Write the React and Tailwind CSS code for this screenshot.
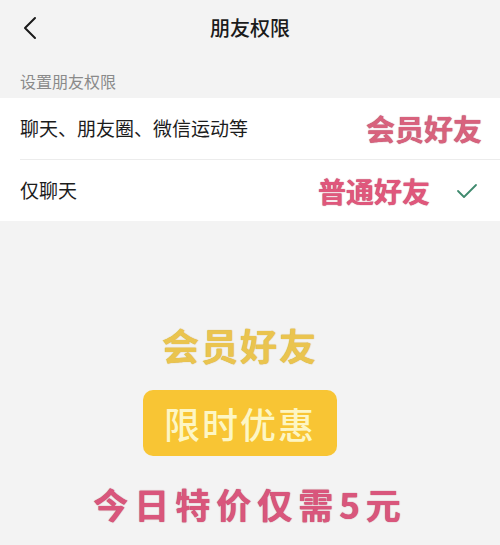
import React from "react";

const cjk = { fontFamily: '"Noto Sans CJK SC", "Noto Sans", sans-serif' };

export default function App() {
  return (
    <div className="w-[500px] h-[545px] bg-[#f3f3f3] flex flex-col overflow-hidden" style={cjk}>
      <div className="h-[55px] flex items-center relative shrink-0">
        <div className="pl-[22px] flex items-center">
          <svg width="16" height="24" viewBox="0 0 16 24" fill="none">
            <path d="M13 2 L3 12 L13 22" stroke="#1a1a1a" strokeWidth="2" strokeLinecap="round" strokeLinejoin="round" />
          </svg>
        </div>
        <div className="flex-1 text-center text-[20px] text-[#1b1b1b] font-medium pr-[38px] leading-none">朋友权限</div>
      </div>
      <div className="h-[42px] flex items-center pl-[20px] text-[16px] text-[#8a8a8a] shrink-0 pt-[10px]">设置朋友权限</div>
      <div className="bg-white flex flex-col shrink-0 mt-[1px]">
        <div className="h-[61px] flex items-center justify-between pl-[20px] pr-[18px]">
          <span className="text-[19px] text-[#1c1c1c]">聊天、朋友圈、微信运动等</span>
          <span className="text-[29px] font-bold text-[#d8627d] leading-none" style={{ textShadow: "0 0 1px #9c3350" }}>会员好友</span>
        </div>
        <div className="ml-[20px] h-px bg-[#ececec]" />
        <div className="h-[61px] flex items-center justify-between pl-[20px] pr-[22px]">
          <span className="text-[19px] text-[#1c1c1c]">仅聊天</span>
          <div className="flex items-center gap-[26px]">
            <span className="text-[28px] font-bold text-[#e0577c] leading-none" style={{ textShadow: "0 0 1px #a8334f" }}>普通好友</span>
            <svg width="22" height="16" viewBox="0 0 22 16" fill="none">
              <path d="M2 8 L8 14 L20 2" stroke="#3f8a6e" strokeWidth="1.8" strokeLinecap="round" strokeLinejoin="round" />
            </svg>
          </div>
        </div>
      </div>
      <div className="flex flex-col items-center pt-[106px]">
        <div className="flex flex-col items-center pr-[20px]">
          <div className="text-[37px] font-bold text-[#eac44f] leading-none tracking-[2px]" style={{ textShadow: "0 0 1px #c9a030" }}>会员好友</div>
          <div className="mt-[26px] w-[194px] h-[66px] rounded-[10px] bg-[#f8c534] flex items-center justify-center">
            <span className="text-[36px] font-medium text-[#fdf6c4] leading-none tracking-[2px]">限时优惠</span>
          </div>
        </div>
        <div className="mt-[30px] text-[35px] font-bold text-[#d9567c] leading-none tracking-[6px]" style={{ textShadow: "0 0 1px #a8334f" }}>今日特价仅需5元</div>
      </div>
    </div>
  );
}
